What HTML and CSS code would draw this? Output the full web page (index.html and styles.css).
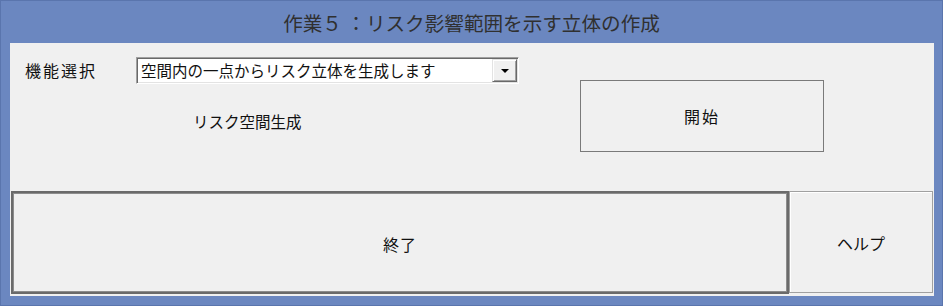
FILE: index.html
```html
<!DOCTYPE html>
<html lang="ja">
<head>
<meta charset="utf-8">
<link rel="stylesheet" href="styles.css">
</head>
<body>
<div class="window">
  <div class="titlebar">作業５ ：リスク影響範囲を示す立体の作成</div>
  <div class="client">
    <div class="top">
      <div class="label">機能選択</div>
      <div class="combo">
        <span class="combo-text">空間内の一点からリスク立体を生成します</span>
        <span class="combo-btn"><span class="arrow"></span></span>
      </div>
      <div class="caption">リスク空間生成</div>
      <div class="btn btn-start">開始</div>
    </div>
    <div class="bottom">
      <div class="btn btn-end">終了</div>
      <div class="btn btn-help">ヘルプ</div>
    </div>
  </div>
</div>
</body>
</html>
```
FILE: styles.css
```css
html, body {
  margin: 0;
  padding: 0;
  width: 943px;
  height: 306px;
  overflow: hidden;
  background: #6b87c0;
}
.window {
  width: 943px;
  height: 306px;
  box-sizing: border-box;
  border: 1px solid #5a75ad;
  background: #6b87c0;
  display: flex;
  flex-direction: column;
  font-family: "Noto Sans CJK JP", "Noto Sans", sans-serif;
  color: #111;
}
.titlebar {
  height: 42px;
  display: flex;
  align-items: center;
  justify-content: center;
  font-size: 19.6px;
  color: #303030;
  padding-top: 1px;
  box-sizing: border-box;
}
.client {
  margin: 0 8px 9px 9px;
  height: 253px;
  background: #f0f0f0;
  display: flex;
  flex-direction: column;
}
.top {
  height: 148px;
  box-sizing: border-box;
  padding: 14px 0 0 15px;
  display: grid;
  grid-template-columns: 111px 383px 61px 244px;
  grid-template-rows: 27px 1fr;
  align-items: start;
}
.label {
  grid-column: 1;
  grid-row: 1;
  align-self: center;
  font-size: 16px;
  letter-spacing: 2px;
  line-height: 20px;
  margin-top: -1px;
}
.combo {
  grid-column: 2;
  grid-row: 1;
  height: 27px;
  box-sizing: border-box;
  background: #fff;
  border-top: 1px solid #a0a0a0;
  border-left: 1px solid #a0a0a0;
  border-bottom: 1px solid #fff;
  border-right: 1px solid #fff;
  box-shadow: inset 1px 1px 0 #696969, inset -1px -1px 0 #e3e3e3;
  padding: 1px;
  display: flex;
  align-items: stretch;
}
.combo-text {
  flex: 1;
  font-size: 15.5px;
  line-height: 23px;
  padding-left: 3px;
  white-space: nowrap;
  overflow: hidden;
}
.combo-btn {
  width: 25px;
  box-sizing: border-box;
  background: #f0f0f0;
  border-top: 1px solid #e3e3e3;
  border-left: 1px solid #e3e3e3;
  border-bottom: 1px solid #696969;
  border-right: 1px solid #696969;
  box-shadow: inset 1px 1px 0 #fff, inset -1px -1px 0 #a0a0a0;
  display: flex;
  align-items: center;
  justify-content: center;
}
.arrow {
  width: 0;
  height: 0;
  border-left: 4px solid transparent;
  border-right: 4px solid transparent;
  border-top: 4px solid #000;
}
.caption {
  grid-column: 2;
  grid-row: 2;
  margin: 27px 0 0 57px;
  font-size: 15.5px;
  line-height: 20px;
}
.btn {
  box-sizing: border-box;
  background: #f0f0f0;
  display: flex;
  align-items: center;
  justify-content: center;
  font-size: 16px;
  color: #111;
}
.btn-start {
  grid-column: 4;
  grid-row: 1 / span 2;
  margin-top: 23px;
  height: 72px;
  border: 1px solid #7a7a7a;
  letter-spacing: 2px;
}
.bottom {
  height: 103px;
  display: flex;
  margin-bottom: 2px;
}
.btn-end {
  width: 778px;
  margin-left: 1px;
  border: 2px solid #6a6a6a;
  box-shadow: inset 0 0 0 1px #8c8c8c;
  letter-spacing: 1px;
  padding-top: 2px;
}
.btn-help {
  width: 144px;
  height: 102px;
  border: 1px solid #a0a0a0;
  box-shadow: inset 1px 1px 0 #fff;
  padding-top: 2px;
}
```
